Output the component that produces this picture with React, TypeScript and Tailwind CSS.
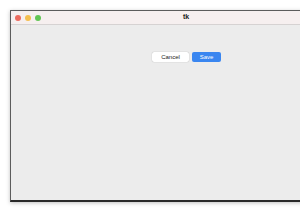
import React from 'react';

export default function App() {
  return (
    <div className="w-[300px] h-[210px] bg-white overflow-hidden pt-[10px] pl-[10px]" style={{ fontFamily: '"Liberation Sans", Arial, sans-serif' }}>
      {/* Window */}
      <div className="w-[352px] h-[192px] flex flex-col border border-[#5c5c5c] border-b-[#2a2a2a] border-b-2 bg-[#ececec] shadow-[0_1px_4px_rgba(0,0,0,0.25)]">
        {/* Title bar */}
        <div className="relative h-[14px] flex items-center bg-[#f6efef] border-b border-[#d6d2d2] px-[4px] gap-[4px]">
          <div className="w-[6px] h-[6px] rounded-full bg-[#ec6a5e]" />
          <div className="w-[6px] h-[6px] rounded-full bg-[#f4bf4f]" />
          <div className="w-[6px] h-[6px] rounded-full bg-[#61c554]" />
          <div className="absolute inset-0 flex items-center justify-center text-[7px] font-bold text-[#222]">tk</div>
        </div>
        {/* Content */}
        <div className="flex-1 pt-[27px] pl-[141px] flex items-start gap-[3px]">
          <button className="w-[37px] h-[10px] bg-white rounded-[2px] shadow-[0_0_1px_rgba(0,0,0,0.35)] text-[6px] leading-none text-[#222]">Cancel</button>
          <button className="w-[29px] h-[10px] bg-[#3a86f0] rounded-[2px] text-[6px] leading-none text-white">Save</button>
        </div>
      </div>
    </div>
  );
}
